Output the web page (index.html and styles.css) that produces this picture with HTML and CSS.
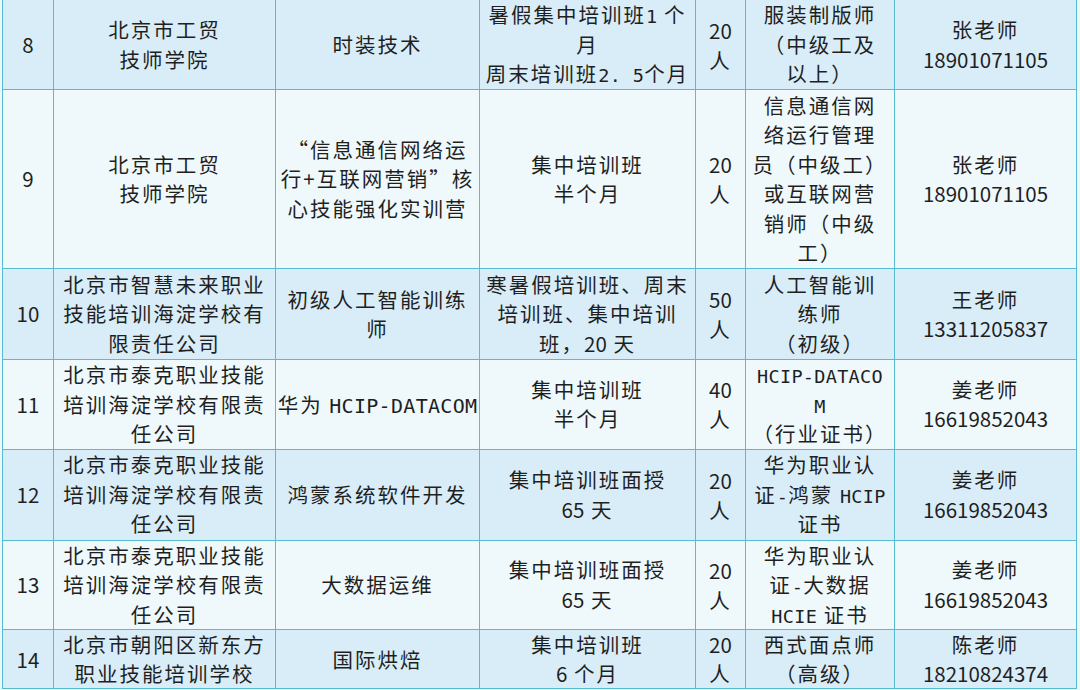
FILE: index.html
```html
<!DOCTYPE html>
<html lang="zh-CN">
<head>
<meta charset="utf-8">
<title>培训项目表</title>
<link rel="stylesheet" href="styles.css">
</head>
<body>
<table class="grid">
  <colgroup>
    <col class="c-no"><col class="c-school"><col class="c-prog"><col class="c-mode"><col class="c-count"><col class="c-cert"><col class="c-contact">
  </colgroup>
  <tbody>
    <tr class="r8 tint">
      <td><span class="num">8</span></td>
      <td>北京市工贸<br>技师学院</td>
      <td>时装技术</td>
      <td>暑假集中培训班<span class="mono">1</span> 个<br>月<br>周末培训班<span class="mono">2. 5</span>个月</td>
      <td class="count"><span class="num">20</span><br>人</td>
      <td>服装制版师<br>（中级工及<br>以上）</td>
      <td>张老师<br><span class="num">18901071105</span></td>
    </tr>
    <tr class="r9 pale">
      <td><span class="num">9</span></td>
      <td>北京市工贸<br>技师学院</td>
      <td>“信息通信网络运<br>行+互联网营销”核<br>心技能强化实训营</td>
      <td>集中培训班<br>半个月</td>
      <td class="count"><span class="num">20</span><br>人</td>
      <td>信息通信网<br>络运行管理<br>员（中级工）<br>或互联网营<br>销师（中级<br>工）</td>
      <td>张老师<br><span class="num">18901071105</span></td>
    </tr>
    <tr class="r10 tint">
      <td><span class="num">10</span></td>
      <td>北京市智慧未来职业<br>技能培训海淀学校有<br>限责任公司</td>
      <td>初级人工智能训练<br>师</td>
      <td>寒暑假培训班、周末<br>培训班、集中培训<br>班，<span class="num">20</span> 天</td>
      <td class="count"><span class="num">50</span><br>人</td>
      <td>人工智能训<br>练师<br>（初级）</td>
      <td>王老师<br><span class="num">13311205837</span></td>
    </tr>
    <tr class="r11 pale">
      <td><span class="num">11</span></td>
      <td>北京市泰克职业技能<br>培训海淀学校有限责<br>任公司</td>
      <td>华为 <span class="mono-l">HCIP-DATACOM</span></td>
      <td>集中培训班<br>半个月</td>
      <td class="count"><span class="num">40</span><br>人</td>
      <td><span class="mono">HCIP-DATACO</span><br><span class="mono">M</span><br>（行业证书）</td>
      <td>姜老师<br><span class="num">16619852043</span></td>
    </tr>
    <tr class="r12 tint">
      <td><span class="num">12</span></td>
      <td>北京市泰克职业技能<br>培训海淀学校有限责<br>任公司</td>
      <td>鸿蒙系统软件开发</td>
      <td>集中培训班面授<br><span class="num">65</span> 天</td>
      <td class="count"><span class="num">20</span><br>人</td>
      <td>华为职业认<br>证<span class="mono">-</span>鸿蒙 <span class="mono">HCIP</span><br>证书</td>
      <td>姜老师<br><span class="num">16619852043</span></td>
    </tr>
    <tr class="r13 pale">
      <td><span class="num">13</span></td>
      <td>北京市泰克职业技能<br>培训海淀学校有限责<br>任公司</td>
      <td>大数据运维</td>
      <td>集中培训班面授<br><span class="num">65</span> 天</td>
      <td class="count"><span class="num">20</span><br>人</td>
      <td>华为职业认<br>证<span class="mono">-</span>大数据<br><span class="mono">HCIE</span> 证书</td>
      <td>姜老师<br><span class="num">16619852043</span></td>
    </tr>
    <tr class="r14 tint">
      <td><span class="num">14</span></td>
      <td>北京市朝阳区新东方<br>职业技能培训学校</td>
      <td>国际烘焙</td>
      <td>集中培训班<br><span class="num">6</span> 个月</td>
      <td class="count"><span class="num">20</span><br>人</td>
      <td>西式面点师<br>（高级）</td>
      <td>陈老师<br><span class="num">18210824374</span></td>
    </tr>
  </tbody>
</table>
</body>
</html>
```
FILE: styles.css
```css
html, body {
  margin: 0;
  padding: 0;
  background: #eef8fc;
  overflow: hidden;
}

.grid {
  border-collapse: collapse;
  table-layout: fixed;
  width: 1074px;
  margin: -1px 0 0 2px;
  font-family: "Noto Sans CJK SC", "Noto Sans", sans-serif;
  font-size: 20.5px;
  letter-spacing: 2px;
  line-height: 29px;
  color: #1f1f1f;
}

.c-no { width: 51px; }
.c-school { width: 222px; }
.c-prog { width: 204px; }
.c-mode { width: 216px; }
.c-count { width: 50px; }
.c-cert { width: 149px; }
.c-contact { width: 182px; }

.grid td {
  border: 1.5px solid #56bcd2;
  text-align: center;
  vertical-align: middle;
  padding: 0;
  white-space: nowrap;
  overflow: hidden;
}

.tint td { background: #d9edf8; }
.pale td { background: #eff9fc; }

.r8 { height: 90px; }
.r9 { height: 179px; }
.r10 { height: 91px; }
.r11 { height: 89px; }
.r12 { height: 91px; }
.r13 { height: 89px; }
.r14 { height: 58px; }

.r8 td, .r9 td, .r10 td, .r11 td, .r12 td, .r13 td {
  line-height: 29.5px;
}

.num {
  letter-spacing: 0;
}

.r8 .count, .r9 .count, .r10 .count, .r11 .count, .r12 .count, .r13 .count {
  line-height: 30px;
}

.mono {
  font-family: "DejaVu Sans Mono", "Liberation Mono", monospace;
  font-size: 18.5px;
  letter-spacing: 0.3px;
  line-height: 1;
}

.mono-l {
  font-family: "DejaVu Sans Mono", "Liberation Mono", monospace;
  font-size: 20px;
  letter-spacing: 0.3px;
  line-height: 1;
}
```
